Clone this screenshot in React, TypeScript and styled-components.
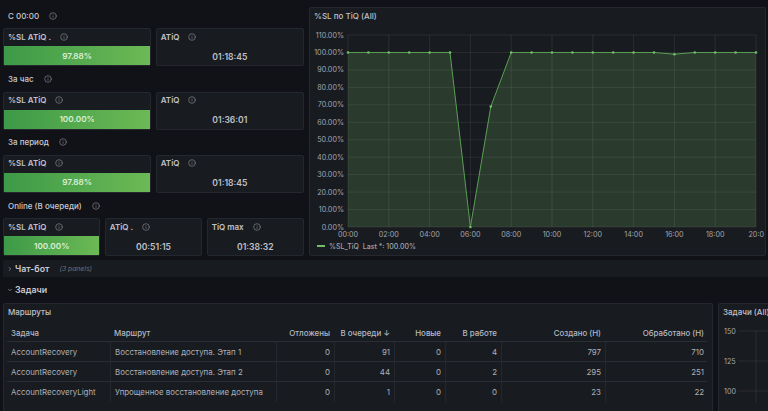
import { ChevronDown, ChevronRight, Info } from "lucide-react";
import styled, { createGlobalStyle } from "styled-components";

const GlobalStyles = createGlobalStyle`
  * { box-sizing: border-box; margin: 0; padding: 0; }
  html, body {
    width: 768px;
    height: 411px;
    overflow: hidden;
    background: #111217;
    color: #ccccdc;
    font-family: Inter, "Noto Sans", sans-serif;
  }
`;

const Page = styled.div`
  width: 768px;
  height: 411px;
  overflow: hidden;
  padding-left: 3px;
`;

const TopGrid = styled.div`
  display: grid;
  grid-template-columns: 301px 457px;
  column-gap: 5px;
  padding-top: 3px;
  height: 256px;
`;

const StatColumn = styled.div`
  display: flex;
  flex-direction: column;
`;

const SectionLabel = styled.div`
  height: 25.33px;
  display: flex;
  align-items: center;
  gap: 10px;
  padding-left: 5px;
  font-size: 8px;
  font-weight: 500;
  color: #c9cad2;
  svg { color: #85878e; }
`;

const StatRow = styled.div<{ $cols: number }>`
  display: grid;
  grid-template-columns: repeat(${(p) => p.$cols}, 1fr);
  column-gap: 4.5px;
  height: 38px;
`;

const Panel = styled.div`
  background: #181b1f;
  border: 1px solid #24272d;
  border-radius: 2px;
`;

const StatPanel = styled(Panel)`
  display: flex;
  flex-direction: column;
`;

const StatTitle = styled.div`
  height: 17px;
  display: flex;
  align-items: center;
  gap: 9px;
  padding: 0 0 2px 4px;
  font-size: 8px;
  font-weight: 600;
  color: #c0c1ca;
  svg { color: #85878e; }
`;

const StatValue = styled.div<{ $fill: boolean }>`
  flex: 1;
  display: flex;
  align-items: center;
  justify-content: center;
  font-size: ${(p) => (p.$fill ? "8.2px" : "8.6px")};
  font-weight: 600;
  padding-top: ${(p) => (p.$fill ? "0" : "2px")};
  color: ${(p) => (p.$fill ? "#d9eed5" : "#c0c1ca")};
  background: ${(p) => (p.$fill ? "linear-gradient(90deg, #3d9a47, #6cb955)" : "transparent")};
`;

const ChartPanel = styled(Panel)`
  margin-top: 4px;
  display: flex;
  flex-direction: column;
  height: 249px;
`;

const PanelTitle = styled.div`
  height: 19px;
  flex-shrink: 0;
  display: flex;
  align-items: center;
  padding: 0 0 4px 4px;
  font-size: 8px;
  font-weight: 500;
  color: #c0c1ca;
  white-space: nowrap;
  overflow: hidden;
`;

const ChartSvg = styled.svg`
  display: block;
  flex-shrink: 0;
  font-family: Inter, sans-serif;
`;

const Legend = styled.div`
  display: flex;
  align-items: center;
  gap: 4px;
  padding-left: 7px;
  height: 10px;
  font-size: 7px;
  font-weight: 500;
  color: #a3a5ac;
`;

const LegendDash = styled.span`
  width: 8px;
  height: 2px;
  background: #73bf69;
`;

const RowHeader = styled.div<{ $band: boolean }>`
  height: 17px;
  margin-top: 4px;
  display: flex;
  align-items: center;
  gap: 2px;
  padding-left: 4px;
  font-size: 8.8px;
  font-weight: 600;
  color: #c9cad2;
  background: ${(p) => (p.$band ? "#181b1f" : "transparent")};
  svg { color: #a5a7ae; }
`;

const RowHint = styled.span`
  margin-left: 8px;
  font-size: 6.8px;
  font-weight: 400;
  font-style: italic;
  color: #6f7178;
`;

const BottomRow = styled.div`
  display: flex;
  gap: 5px;
  margin-top: 5px;
  height: 120px;
`;

const TablePanel = styled(Panel)`
  width: 710px;
  flex-shrink: 0;
`;

const SidePanel = styled(Panel)`
  width: 100px;
  flex-shrink: 0;
`;

const TableWrap = styled.div`
  padding: 1px 5px 0 3px;
`;

const Cells = styled.div<{ $head?: boolean }>`
  display: grid;
  grid-template-columns: 103px 166px 58px 60px 51px 56px 104px 103px;
  height: ${(p) => (p.$head ? "18px" : "20px")};
  border-bottom: 1px solid #2a2d33;
  &:last-child { border-bottom: none; }
`;

const Cell = styled.div<{ $right?: boolean; $head?: boolean }>`
  display: flex;
  align-items: center;
  justify-content: ${(p) => (p.$right ? "flex-end" : "flex-start")};
  padding: 0 4px;
  white-space: nowrap;
  overflow: hidden;
  font-size: 7.9px;
  font-weight: ${(p) => (p.$head ? 500 : 400)};
  color: ${(p) => (p.$head ? "#b4b9c4" : "#aeb0b7")};
  border-left: ${(p) => (p.$head ? "none" : "1px solid #24272d")};
  &:first-child { border-left: none; }
`;

const stats = [
  { label: "С 00:00", cols: 2, items: [["%SL ATiQ .", "97.88%", true], ["ATiQ", "01:18:45", false]] },
  { label: "За час", cols: 2, items: [["%SL ATiQ", "100.00%", true], ["ATiQ", "01:36:01", false]] },
  { label: "За период", cols: 2, items: [["%SL ATiQ", "97.88%", true], ["ATiQ", "01:18:45", false]] },
  {
    label: "Online (В очереди)",
    cols: 3,
    items: [["%SL ATiQ", "100.00%", true], ["ATiQ .", "00:51:15", false], ["TiQ max", "01:38:32", false]],
  },
] as const;

const headers = ["Задача", "Маршрут", "Отложены", "В очереди ↓", "Новые", "В работе", "Создано (Н)", "Обработано (Н)"];

const rows = [
  ["AccountRecovery", "Восстановление доступа. Этап 1", "0", "91", "0", "4", "797", "710"],
  ["AccountRecovery", "Восстановление доступа. Этап 2", "0", "44", "0", "2", "295", "251"],
  ["AccountRecoveryLight", "Упрощенное восстановление доступа", "0", "1", "0", "0", "23", "22"],
];

// plot area inside the svg
const left = 38;
const right = 446;
const yTop = 8;
const yZero = 200;
const xAt = (h: number) => left + ((right - left) * h) / 20;
const yAt = (v: number) => yZero - ((yZero - yTop) * v) / 110;

const series = Array.from({ length: 21 }, (_, h) => {
  if (h === 6) return 0;
  if (h === 7) return 69;
  if (h === 16) return 99;
  return 100;
});

function SlChart() {
  const line = series.map((v, h) => `${xAt(h)},${yAt(v)}`).join(" ");
  const area = `${xAt(0)},${yZero} ${line} ${xAt(20)},${yZero}`;
  return (
    <ChartSvg width={455} height={214} viewBox="0 0 455 214">
      {Array.from({ length: 12 }, (_, i) => (
        <g key={i}>
          <line x1={left} x2={right} y1={yAt(i * 10)} y2={yAt(i * 10)} stroke="#ffffff" strokeOpacity={0.08} />
          <text x={34} y={yAt(i * 10) + 2.5} fontSize={7.2} fill="#a3a5ac" textAnchor="end">
            {(i * 10).toFixed(2)}%
          </text>
        </g>
      ))}
      <polygon points={area} fill="#73bf69" fillOpacity={0.2} />
      {Array.from({ length: 11 }, (_, i) => (
        <g key={i}>
          <line x1={xAt(i * 2)} x2={xAt(i * 2)} y1={yTop} y2={yZero} stroke="#ffffff" strokeOpacity={0.08} />
          <text
            x={i === 10 ? xAt(20) + 8 : xAt(i * 2)}
            y={210}
            fontSize={7.2}
            fill="#a3a5ac"
            textAnchor={i === 10 ? "end" : "middle"}
          >
            {i === 10 ? "20:0" : `${String(i * 2).padStart(2, "0")}:00`}
          </text>
        </g>
      ))}
      <polyline points={line} fill="none" stroke="#5a9f55" strokeWidth={1} />
      {series.map((v, h) => (
        <circle key={h} cx={xAt(h)} cy={yAt(v)} r={1.3} fill="#73bf69" />
      ))}
    </ChartSvg>
  );
}

function TasksChart() {
  const ticks = [
    { label: "150", y: 8 },
    { label: "125", y: 38 },
    { label: "100", y: 68 },
  ];
  return (
    <ChartSvg width={98} height={80} viewBox="0 0 98 80">
      {ticks.map((t) => (
        <g key={t.label}>
          <line x1={20} x2={98} y1={t.y} y2={t.y} stroke="#ffffff" strokeOpacity={0.08} />
          <text x={5} y={t.y + 2.5} fontSize={7.2} fill="#a3a5ac">
            {t.label}
          </text>
        </g>
      ))}
      <line x1={37} x2={37} y1={8} y2={80} stroke="#ffffff" strokeOpacity={0.08} />
    </ChartSvg>
  );
}

export default function App() {
  return (
    <Page>
      <GlobalStyles />
      <TopGrid>
        <StatColumn>
          {stats.map((s) => (
            <div key={s.label}>
              <SectionLabel>
                {s.label}
                <Info size={8} />
              </SectionLabel>
              <StatRow $cols={s.cols}>
                {s.items.map(([title, value, fill]) => (
                  <StatPanel key={title}>
                    <StatTitle>
                      {title}
                      <Info size={8} />
                    </StatTitle>
                    <StatValue $fill={fill}>{value}</StatValue>
                  </StatPanel>
                ))}
              </StatRow>
            </div>
          ))}
        </StatColumn>
        <ChartPanel>
          <PanelTitle>%SL по TiQ (All)</PanelTitle>
          <SlChart />
          <Legend>
            <LegendDash />
            %SL_TiQ&nbsp;&nbsp;Last *: 100.00%
          </Legend>
        </ChartPanel>
      </TopGrid>
      <RowHeader $band>
        <ChevronRight size={6} strokeWidth={2.5} />
        Чат-бот
        <RowHint>(3 panels)</RowHint>
      </RowHeader>
      <RowHeader $band={false}>
        <ChevronDown size={6} strokeWidth={2.5} />
        Задачи
      </RowHeader>
      <BottomRow>
        <TablePanel>
          <PanelTitle>Маршруты</PanelTitle>
          <TableWrap>
            <Cells $head>
              {headers.map((h, i) => (
                <Cell key={h} $head $right={i > 1}>
                  {h}
                </Cell>
              ))}
            </Cells>
            {rows.map((r, ri) => (
              <Cells key={ri}>
                {r.map((c, i) => (
                  <Cell key={i} $right={i > 1}>
                    {c}
                  </Cell>
                ))}
              </Cells>
            ))}
          </TableWrap>
        </TablePanel>
        <SidePanel>
          <PanelTitle>Задачи (All)</PanelTitle>
          <TasksChart />
        </SidePanel>
      </BottomRow>
    </Page>
  );
}
